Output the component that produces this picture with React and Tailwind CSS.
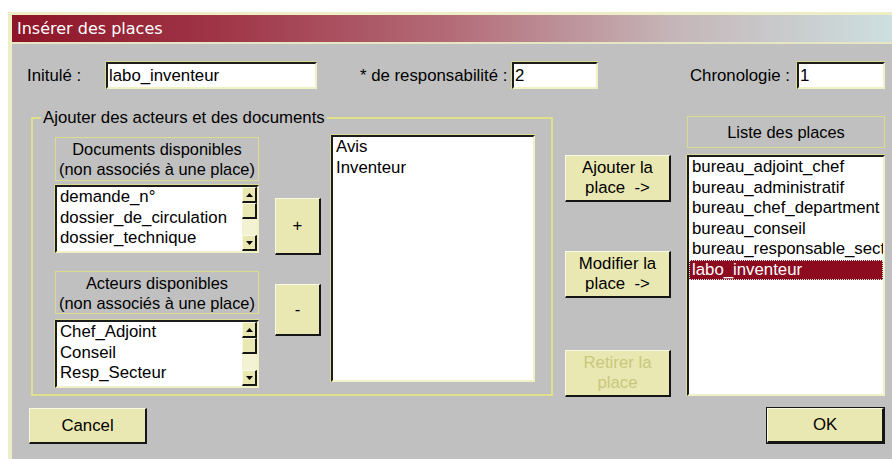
import React from "react";

const FONT = { fontFamily: '"Liberation Sans", Arial, sans-serif' };

const sunken =
  "bg-white border-t-2 border-l-2 border-b-2 border-r-2 border-t-[#1c1c1c] border-l-[#1c1c1c] border-b-[#f1f1c6] border-r-[#f1f1c6] shadow-[0_-1px_0_#dcdc92,-1px_0_0_#dcdc92]";
const raised =
  "bg-[#eae8b2] border-t border-l border-b-2 border-r-2 border-t-[#fafae4] border-l-[#fafae4] border-b-[#151515] border-r-[#151515]";

function Arrow({ up }) {
  return (
    <div className={`${raised} h-[16px] flex items-center justify-center`}>
      <svg width="7" height="4" viewBox="0 0 7 4">
        {up ? (
          <polygon points="3.5,0 7,4 0,4" fill="#000" />
        ) : (
          <polygon points="0,0 7,0 3.5,4" fill="#000" />
        )}
      </svg>
    </div>
  );
}

function ScrollList({ items, className }) {
  return (
    <div className={`${sunken} ${className} flex overflow-hidden`}>
      <div className="flex-1 overflow-hidden pl-[3px]">
        {items.map((t) => (
          <div key={t} className="h-[20.5px] leading-[20.5px] whitespace-nowrap">
            {t}
          </div>
        ))}
      </div>
      <div className="w-[15px] flex flex-col">
        <Arrow up />
        <div className={`${raised} h-[16px]`} />
        <div className="flex-1 bg-[#f3f3d4]" />
        <Arrow />
      </div>
    </div>
  );
}

function LabelBox({ children, className }) {
  return (
    <div
      className={`border border-[#dcdc8e] flex flex-col items-center justify-center leading-[20px] whitespace-nowrap text-[16.4px] ${className}`}
    >
      {children}
    </div>
  );
}

function Btn({ children, className, disabled }) {
  return (
    <div
      className={`${raised} ${className} flex flex-col items-center justify-center leading-[20px] whitespace-pre ${
        disabled ? "text-[#c9c77c]" : "text-black"
      }`}
    >
      {children}
    </div>
  );
}

export default function App() {
  return (
    <div
      className="w-[892px] h-[459px] bg-white pt-[12px] pl-[8px] overflow-hidden text-[16.8px] text-black"
      style={FONT}
    >
      <div className="h-[447px] flex flex-col bg-[#c0c0c0] border-l-4 border-t-[3px] border-[#eeeec6]">
        {/* Title bar */}
        <div className="h-[29px] shrink-0 flex items-center pl-[5px] bg-[linear-gradient(to_right,#8e1427_0%,#a0384a_25%,#b46c78_50%,#c5b5b8_75%,#cddfdf_100%)] border-b-2 border-[#e6e6c4]">
          <span
            className="text-white text-[16px]"
            style={{ fontFamily: '"DejaVu Sans", Verdana, sans-serif' }}
          >
            Insérer des places
          </span>
        </div>

        {/* Body */}
        <div className="flex flex-col pt-[18px]">
          {/* Row 1 */}
          <div className="flex items-center h-[27px]">
            <span className="ml-[15px] w-[79px]">Initulé :</span>
            <div className={`${sunken} w-[211px] h-[27px] leading-[23px] pl-[1px]`}>
              labo_inventeur
            </div>
            <span className="ml-[43px] w-[152px]">* de responsabilité :</span>
            <div className={`${sunken} w-[86px] h-[27px] leading-[23px] pl-[1px]`}>2</div>
            <span className="ml-[92px] w-[107px]">Chronologie :</span>
            <div className={`${sunken} w-[88px] h-[27px] leading-[23px] pl-[1px]`}>1</div>
          </div>

          {/* Row 2 */}
          <div className="flex items-start mt-[17px]">
            <fieldset className="ml-[19px] mt-[2px] w-[522px] border-2 border-[#e0e08a] pt-[7px] pb-[6px]">
              <legend className="ml-[8px] px-[2px] leading-[20px]">
                Ajouter des acteurs et des documents
              </legend>
              <div className="flex items-start pl-[22px] pr-[16px]">
                <div className="w-[204px] mt-[2px] flex flex-col">
                  <LabelBox className="h-[44px]">
                    <span>Documents disponibles</span>
                    <span>(non associés à une place)</span>
                  </LabelBox>
                  <ScrollList
                    className="mt-[4px] h-[68px]"
                    items={[
                      "demande_n°",
                      "dossier_de_circulation",
                      "dossier_technique",
                      "droits_brevet",
                    ]}
                  />
                  <LabelBox className="mt-[18px] h-[43px]">
                    <span>Acteurs disponibles</span>
                    <span>(non associés à une place)</span>
                  </LabelBox>
                  <ScrollList
                    className="mt-[6px] h-[68px]"
                    items={["Chef_Adjoint", "Conseil", "Resp_Secteur", "Secrétariat"]}
                  />
                </div>
                <div className="ml-[16px] w-[46px] flex flex-col">
                  <Btn className="mt-[63px] h-[57px]">+</Btn>
                  <Btn className="mt-[29px] h-[52px]">-</Btn>
                </div>
                <div className={`${sunken} ml-[10px] w-[204px] h-[247px] pl-[3px]`}>
                  <div className="h-[20.5px] leading-[20.5px]">Avis</div>
                  <div className="h-[20.5px] leading-[20.5px]">Inventeur</div>
                </div>
              </div>
            </fieldset>

            <div className="ml-[12px] w-[106px] flex flex-col">
              <Btn className="mt-[49px] h-[47px]">
                <span>Ajouter la</span>
                <span>{"place  ->"}</span>
              </Btn>
              <Btn className="mt-[49px] h-[47px]">
                <span>Modifier la</span>
                <span>{"place  ->"}</span>
              </Btn>
              <Btn className="mt-[52px] h-[47px]" disabled>
                <span>Retirer la</span>
                <span>place</span>
              </Btn>
            </div>

            <div className="ml-[16px] w-[198px] mt-[10px] flex flex-col">
              <LabelBox className="h-[32px]">
                <span>Liste des places</span>
              </LabelBox>
              <div className={`${sunken} mt-[7px] h-[241px] overflow-hidden`}>
                {[
                  "bureau_adjoint_chef",
                  "bureau_administratif",
                  "bureau_chef_department",
                  "bureau_conseil",
                  "bureau_responsable_secteur",
                ].map((t) => (
                  <div
                    key={t}
                    className="h-[20.5px] leading-[20.5px] pl-[3px] whitespace-nowrap overflow-hidden"
                  >
                    {t}
                  </div>
                ))}
                <div className="h-[20.5px] leading-[18.5px] pl-[2px] bg-[#8c0b1f] text-white border border-dotted border-[#cfeeee]">
                  labo_inventeur
                </div>
              </div>
            </div>
          </div>

          {/* Row 3 */}
          <div className="flex justify-between mt-[11px]">
            <Btn className="ml-[17px] w-[118px] h-[36px]">Cancel</Btn>
            <Btn className="mr-[8px] w-[117px] h-[35px] border-[#f6f6dc] border-b-[#151515] border-r-[#151515] shadow-[0_0_0_1px_#151515]">
              OK
            </Btn>
          </div>
        </div>
      </div>
    </div>
  );
}
